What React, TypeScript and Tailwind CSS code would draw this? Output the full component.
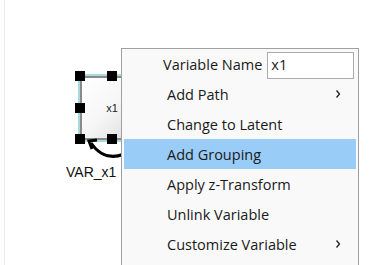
import React from "react";

const items = [
  { label: "Add Path", sub: true },
  { label: "Change to Latent" },
  { label: "Add Grouping", active: true },
  { label: "Apply z-Transform" },
  { label: "Unlink Variable" },
  { label: "Customize Variable", sub: true },
];

const Chevron = () => (
  <svg width="6" height="9" viewBox="0 0 6 9" className="absolute right-[15px] top-1/2 -translate-y-1/2">
    <path d="M1.5 1 L4.5 4.5 L1.5 8" fill="none" stroke="#222" strokeWidth="1.3" />
  </svg>
);

const Handle = ({ x, y }: { x: number; y: number }) => (
  <div className="absolute w-[10px] h-[10px] bg-black" style={{ left: x, top: y }} />
);

export default function App() {
  return (
    <div className="relative w-[392px] h-[265px] bg-white overflow-hidden">
      <div className="absolute left-[4px] top-0 h-full border-l border-[#ebebeb]" />

      {/* node on canvas */}
      <div className="absolute left-[80px] top-[76px] w-[64px] h-[64px] border-2 border-[#8a8a8a] shadow-[0_0_0_2px_#a8dcdc] bg-gradient-to-br from-white via-[#f6f6f6] to-[#d8d8d8] flex items-center justify-center">
        <span className="text-[11px] text-[#222] font-['Liberation_Sans',sans-serif]">x1</span>
      </div>
      <Handle x={75} y={71} />
      <Handle x={107} y={71} />
      <Handle x={75} y={103} />
      <Handle x={75} y={134} />
      <Handle x={107} y={134} />
      <svg className="absolute left-0 top-0" width="130" height="170">
        <path d="M124 154 Q104 162 91 143" fill="none" stroke="#000" strokeWidth="3" />
        <path d="M97 140 L89 141 L92 149" fill="none" stroke="#000" strokeWidth="3" />
      </svg>
      <div className="absolute left-[66px] top-[163px] text-[14px] leading-[18px] text-[#111] font-['Liberation_Sans',sans-serif]">
        VAR_x1
      </div>

      {/* context menu */}
      <div className="absolute left-[121px] top-[48px] w-[238px] h-[230px] bg-[#f9f9f9] border border-[#a0a0a0] font-['Open_Sans',sans-serif] text-[14.5px] text-[#1a1a1a] whitespace-nowrap">
        <div className="h-[30px] flex items-center pl-[41px] pt-[2px]">
          <span>Variable Name</span>
          <div className="ml-[5px] shrink-0 w-[87px] h-[27px] border border-[#ababab] bg-white flex items-center pl-[3px]">x1</div>
        </div>
        {items.map((it) => (
          <div
            key={it.label}
            className={`relative mx-[2px] h-[30px] flex items-center pl-[43px] pt-[2px] ${it.active ? "bg-[#99ccf6]" : ""}`}
          >
            {it.label}
            {it.sub && <Chevron />}
          </div>
        ))}
      </div>
    </div>
  );
}
